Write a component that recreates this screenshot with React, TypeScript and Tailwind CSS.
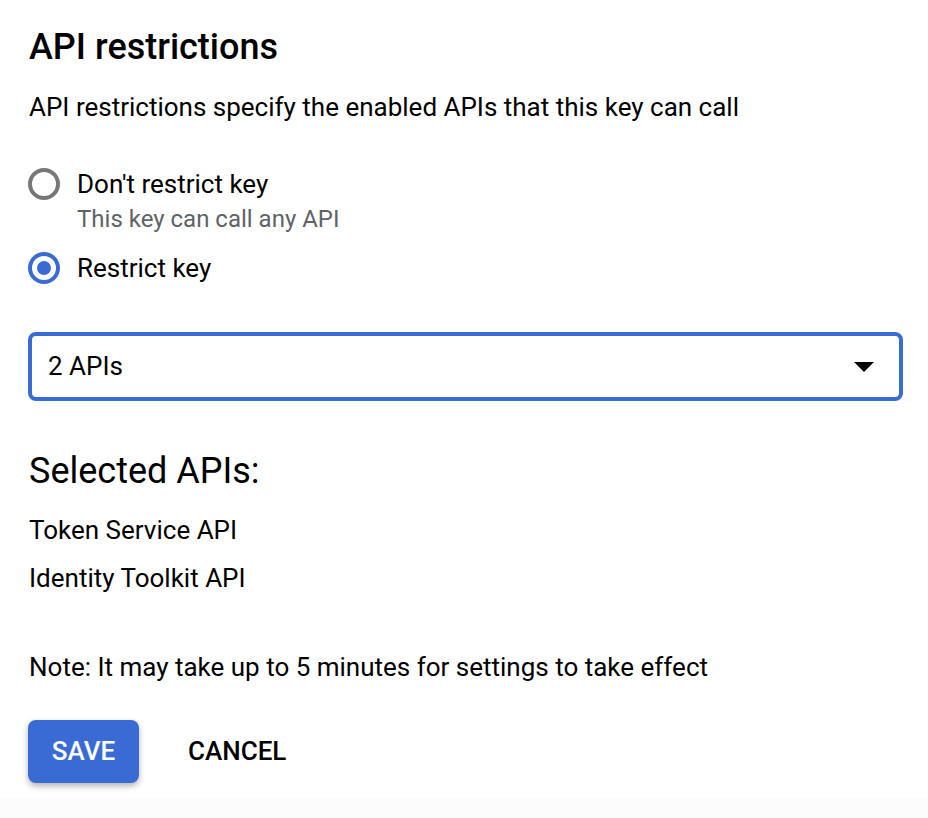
import { useState } from "react";

const font = { fontFamily: "Roboto, 'Liberation Sans', sans-serif" };

interface RadioProps {
  checked: boolean;
  label: string;
  onSelect: () => void;
}

function Radio({ checked, label, onSelect }: RadioProps) {
  return (
    <button type="button" onClick={onSelect} className="flex h-[36px] items-center gap-[17px] text-left">
      <span
        className={
          checked
            ? "flex h-[32px] w-[32px] items-center justify-center rounded-full border-[4px] border-[#3a6bd5]"
            : "flex h-[32px] w-[32px] items-center justify-center rounded-full border-[4px] border-[#777777]"
        }
      >
        {checked && <span className="h-[14px] w-[14px] rounded-full bg-[#3a6bd5]" />}
      </span>
      <span className="text-[26px] leading-[36px] text-black">{label}</span>
    </button>
  );
}

export default function App() {
  const [restrict, setRestrict] = useState(true);

  return (
    <div className="flex min-h-screen flex-col bg-white" style={font}>
      <div className="flex flex-col pl-[28px] pr-[25px] pt-[27px] pb-[15px]">
        <h2 className="pl-[1px] text-[36px] font-medium leading-[40px] text-black">API restrictions</h2>
        <p className="mt-[22px] pl-[1px] text-[26px] leading-[36px] text-black">
          API restrictions specify the enabled APIs that this key can call
        </p>

        <div className="mt-[41px] flex flex-col">
          <Radio checked={!restrict} label="Don't restrict key" onSelect={() => setRestrict(false)} />
          <span className="pl-[49px] text-[24px] leading-[34px] text-[#5f6368]">This key can call any API</span>
          <div className="mt-[14px]">
            <Radio checked={restrict} label="Restrict key" onSelect={() => setRestrict(true)} />
          </div>
        </div>

        <button
          type="button"
          className="mt-[46px] flex h-[69px] w-[875px] items-center justify-between rounded-[8px] border-[4px] border-[#3a6bd5] pl-[16px] pr-[25px]"
        >
          <span className="text-[26px] text-black">2 APIs</span>
          <svg width="20" height="10" viewBox="0 0 20 10">
            <path d="M0 0h20L10 10z" fill="#000" />
          </svg>
        </button>

        <h3 className="mt-[48px] pl-[1px] text-[36px] leading-[44px] text-black">Selected APIs:</h3>
        <div className="mt-[19px] flex flex-col gap-[12px] pl-[1px] text-[26px] leading-[36px] text-black">
          <span>Token Service API</span>
          <span>Identity Toolkit API</span>
        </div>

        <p className="mt-[53px] pl-[1px] text-[26px] leading-[36px] text-black">
          Note: It may take up to 5 minutes for settings to take effect
        </p>

        <div className="mt-[35px] flex items-center gap-[49px]">
          <button
            type="button"
            className="flex h-[63px] w-[111px] items-center justify-center rounded-[8px] bg-[#3a6bd5] text-[26px] font-medium text-white shadow-[0_3px_6px_rgba(0,0,0,0.3)]"
          >
            SAVE
          </button>
          <button type="button" className="text-[26px] font-medium text-black">
            CANCEL
          </button>
        </div>
      </div>
      <div className="flex-1 bg-[#fcfcfc]" />
    </div>
  );
}
